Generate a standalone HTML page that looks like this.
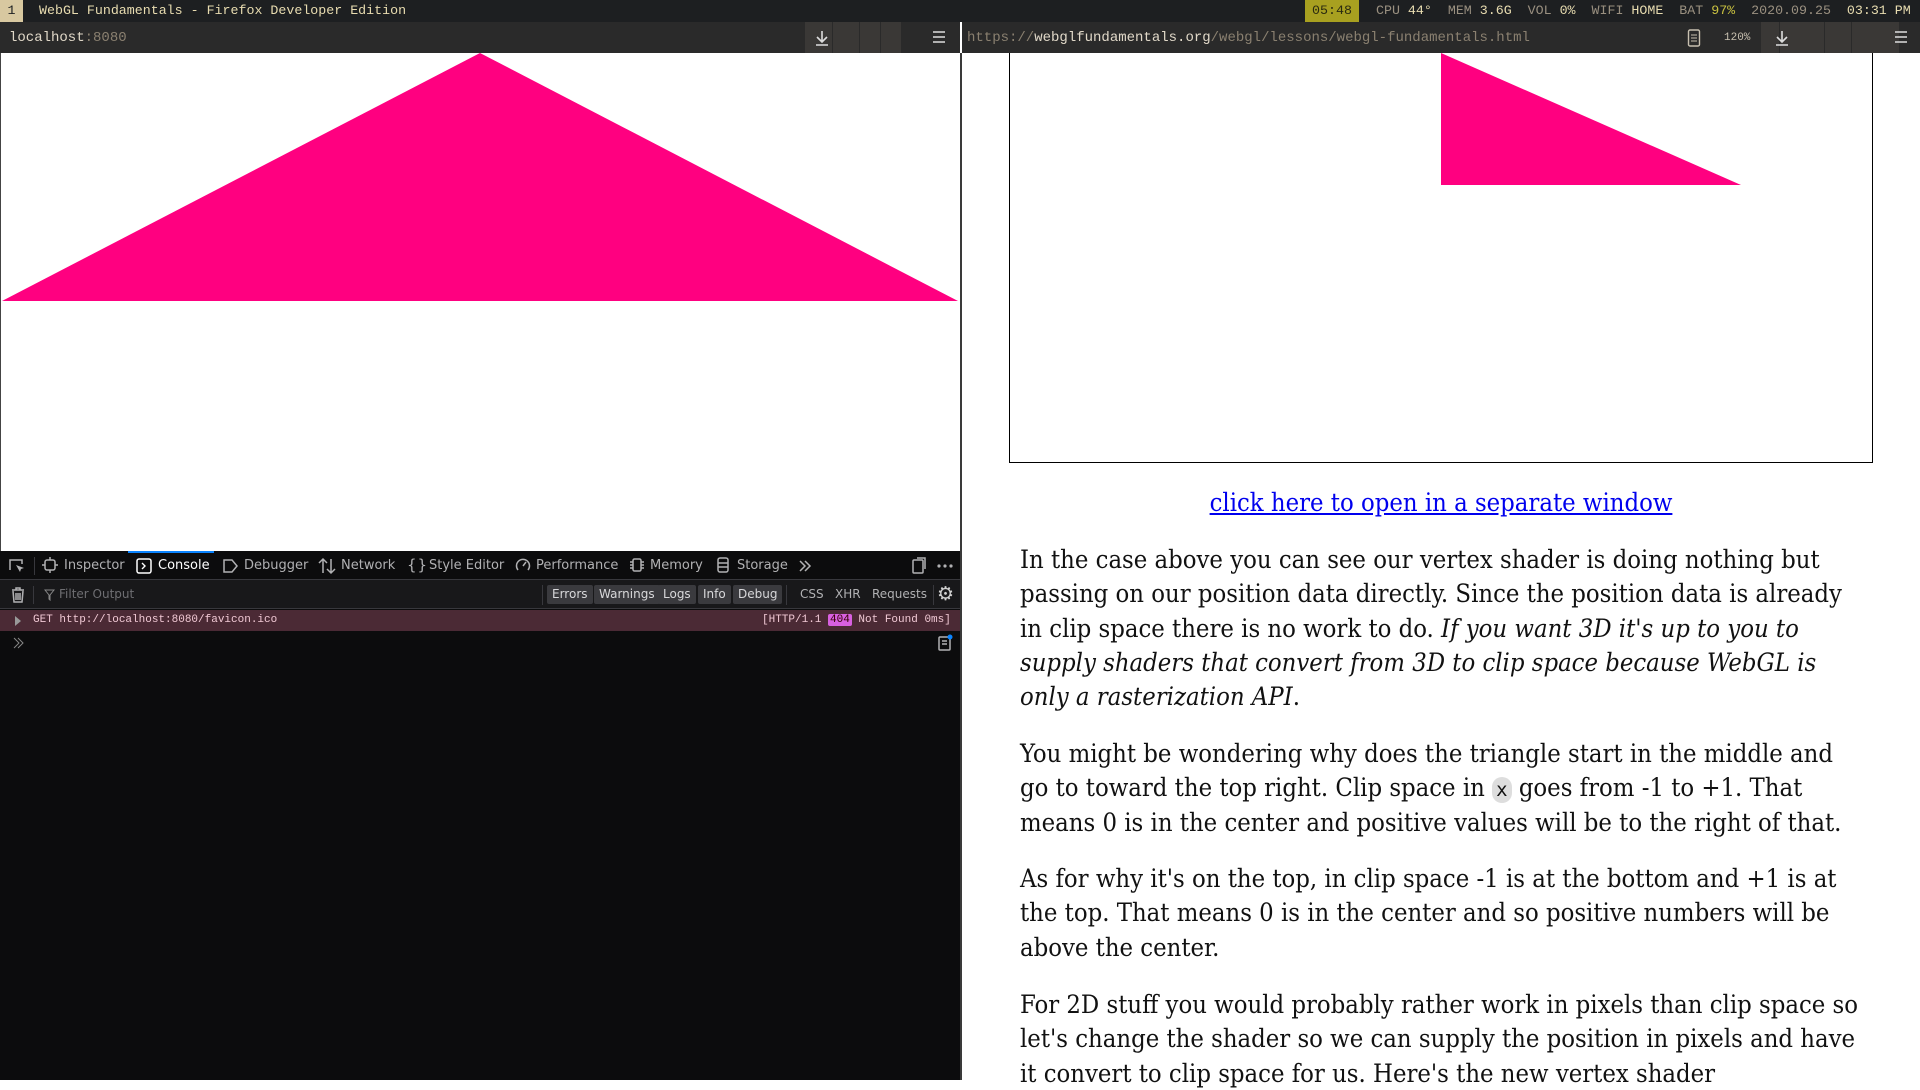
<!DOCTYPE html>
<html><head><meta charset="utf-8">
<style>
*{margin:0;padding:0;box-sizing:border-box}
body{width:1920px;height:1080px;overflow:hidden;background:#fff;position:relative;font-family:"DejaVu Sans","Liberation Sans",sans-serif}
.a{position:absolute;white-space:nowrap}
.mono{font-family:"Liberation Mono","DejaVu Sans Mono",monospace}
#top{left:0;top:0;width:1920px;height:22px;background:#1d1f21;color:#e8dcb0;font-size:13.3px;line-height:22px}
.urlbar{top:22px;height:31px;background:#2a2a2a;font-size:14px;line-height:33px;color:#8a8070}
.btnbg{background:#3a3836;height:31px;top:0}
.tb{color:#b1b1b3;font-size:13px;line-height:28px}
.icn{stroke:#b1b1b3;fill:none;stroke-width:1.5}
.txt{font-family:"DejaVu Serif Condensed","DejaVu Serif","Liberation Serif",serif;font-stretch:condensed;font-size:25.4px;color:#111;left:1020px;line-height:34.3px}
.fb{top:585px;height:19px;background:#3a3a3e;color:#d8d8da;font-size:12px;line-height:19px;padding:0 5px;border-radius:2px}
</style></head><body>

<div class="a mono" id="top">
  <div class="a" style="left:0;top:0;width:23px;height:22px;background:#d8c8a0;color:#1d1f21;text-align:center">1</div>
  <div class="a" style="left:39px;top:0">WebGL Fundamentals - Firefox Developer Edition</div>
  <div class="a" style="left:1305px;top:0;width:54px;height:22px;background:#a8a020;color:#2a2a10;text-align:center">05:48</div>
  <div class="a" style="left:1376px;top:0;color:#9a9080">CPU <span style="color:#e8dcb0">44°</span>&nbsp; MEM <span style="color:#e8dcb0">3.6G</span>&nbsp; VOL <span style="color:#e8dcb0">0%</span>&nbsp; WIFI <span style="color:#e8dcb0">HOME</span>&nbsp; BAT <span style="color:#c8c040">97%</span>&nbsp; 2020.09.25&nbsp; <span style="color:#e8dcb0">03:31 PM</span></div>
</div>

<div class="a urlbar mono" style="left:0;width:960px">
  <span class="a" style="left:9px;top:0"><span style="color:#e0d8c8">localhost</span>:8080</span>
  <div class="a btnbg" style="left:805px;width:96px"></div>
  <div class="a" style="left:832px;top:0;width:1px;height:31px;background:#2a2a2a"></div>
  <div class="a" style="left:859px;top:0;width:1px;height:31px;background:#2a2a2a"></div>
  <div class="a" style="left:880px;top:0;width:1px;height:31px;background:#2a2a2a"></div>
  <svg class="a" style="left:812px;top:6px" width="20" height="20"><path d="M10 3v11M5 9l5 5 5-5M4 17h12" stroke="#ddd" stroke-width="1.6" fill="none"/></svg>
  <svg class="a" style="left:932px;top:8px" width="14" height="14"><path d="M1 2h12M1 7h12M1 12h12" stroke="#ddd" stroke-width="1.6"/></svg>
</div>
<div class="a urlbar mono" style="left:962px;width:958px">
  <span class="a" style="left:5px;top:0">https://<span style="color:#e0d8c8">webglfundamentals.org</span>/webgl/lessons/webgl-fundamentals.html</span>
  <svg class="a" style="left:725px;top:7px" width="14" height="18"><rect x="1.5" y="1" width="11" height="16" rx="1.5" stroke="#c8c0b0" fill="none" stroke-width="1.4"/><path d="M4 6h6M4 9h6M4 12h6" stroke="#c8c0b0"/></svg>
  <span class="a" style="left:762px;top:0;font-size:11px;color:#c8c0b0">120%</span>
  <div class="a btnbg" style="left:799px;width:138px"></div>
  <div class="a" style="left:817px;top:0;width:1px;height:31px;background:#2a2a2a"></div>
  <div class="a" style="left:862px;top:0;width:1px;height:31px;background:#2a2a2a"></div>
  <div class="a" style="left:889px;top:0;width:1px;height:31px;background:#2a2a2a"></div>
  <div class="a" style="left:937px;top:0;width:21px;height:31px;background:#2a2a2a"></div>
  <svg class="a" style="left:810px;top:6px" width="20" height="20"><path d="M10 3v11M5 9l5 5 5-5M4 17h12" stroke="#ddd" stroke-width="1.6" fill="none"/></svg>
  <svg class="a" style="left:932px;top:8px" width="14" height="14"><path d="M1 2h12M1 7h12M1 12h12" stroke="#ddd" stroke-width="1.6"/></svg>
</div>

<svg class="a" style="left:0;top:53px" width="960" height="498"><path d="M480 0L958 248H2Z" fill="#ff0080"/><rect x="0" y="0" width="1" height="498" fill="#444"/></svg>
<div class="a" style="left:960px;top:53px;width:2px;height:1027px;background:#3a3a3a"></div>

<div class="a" style="left:0;top:551px;width:960px;height:529px;background:#0c0c0d"></div>
<div class="a" style="left:0;top:551px;width:960px;height:29px;background:#0c0c0d;border-bottom:1px solid #38383d"></div>
<div class="a" style="left:128px;top:551px;width:86px;height:2px;background:#0a84ff"></div>
<svg class="a" style="left:8px;top:557px" width="18" height="18"><path d="M2 13V3h12v4" class="icn"/><path d="M8 8l8 3-3 1-1 3z" fill="#b1b1b3"/></svg>
<div class="a" style="left:34px;top:557px;width:1px;height:18px;background:#38383d"></div>
<svg class="a" style="left:42px;top:557px" width="16" height="16"><rect x="3" y="3" width="10" height="10" rx="2" class="icn"/><path d="M8 0v3M8 13v3M0 8h3M13 8h3" class="icn"/></svg>
<div class="a tb" style="left:64px;top:552px">Inspector</div>
<svg class="a" style="left:136px;top:558px" width="16" height="16"><rect x="1" y="1" width="14" height="14" rx="2" stroke="#fff" fill="none" stroke-width="1.5"/><path d="M6 5l3 3-3 3" stroke="#fff" fill="none" stroke-width="1.4"/></svg>
<div class="a tb" style="left:158px;top:552px;color:#fff">Console</div>
<svg class="a" style="left:222px;top:558px" width="16" height="16"><path d="M2 2h8l5 6-5 6H2z" class="icn"/></svg>
<div class="a tb" style="left:244px;top:552px">Debugger</div>
<svg class="a" style="left:318px;top:557px" width="18" height="18"><path d="M5 16V2M1 6l4-4 4 4M13 2v14M9 12l4 4 4-4" class="icn"/></svg>
<div class="a tb" style="left:341px;top:552px">Network</div>
<div class="a tb" style="left:407px;top:551px;font-size:15px;letter-spacing:1px">{}</div>
<div class="a tb" style="left:429px;top:552px">Style Editor</div>
<svg class="a" style="left:515px;top:557px" width="16" height="16"><path d="M3 13A6.5 6.5 0 1 1 13 13" class="icn"/><path d="M8 9l3-4" class="icn"/></svg>
<div class="a tb" style="left:536px;top:552px">Performance</div>
<svg class="a" style="left:629px;top:557px" width="16" height="16"><rect x="4" y="2" width="8" height="12" rx="1.5" class="icn"/><path d="M1 5h3M1 8h3M1 11h3M12 5h3M12 8h3M12 11h3" class="icn"/></svg>
<div class="a tb" style="left:650px;top:552px">Memory</div>
<svg class="a" style="left:715px;top:557px" width="16" height="16"><rect x="3" y="1" width="10" height="14" rx="2" class="icn"/><path d="M3 6h10M3 10h10" class="icn"/></svg>
<div class="a tb" style="left:737px;top:552px">Storage</div>
<svg class="a" style="left:798px;top:559px" width="14" height="14"><path d="M2 2l5 5-5 5M7 2l5 5-5 5" class="icn"/></svg>
<svg class="a" style="left:911px;top:557px" width="16" height="18"><rect x="2" y="3" width="10" height="13" rx="1" class="icn"/><path d="M6 1h8v11" class="icn"/></svg>
<svg class="a" style="left:937px;top:563px" width="16" height="6"><circle cx="2" cy="3" r="1.6" fill="#b1b1b3"/><circle cx="8" cy="3" r="1.6" fill="#b1b1b3"/><circle cx="14" cy="3" r="1.6" fill="#b1b1b3"/></svg>

<div class="a" style="left:0;top:580px;width:960px;height:29px;background:#18181a;border-bottom:1px solid #38383d"></div>
<svg class="a" style="left:10px;top:586px" width="16" height="18"><path d="M2 4h12M6 4V2h4v2M3 5l1 11h8l1-11M6 7v7M8 7v7M10 7v7" class="icn"/></svg>
<div class="a" style="left:33px;top:586px;width:1px;height:18px;background:#38383d"></div>
<svg class="a" style="left:44px;top:589px" width="11" height="12"><path d="M1 1h9L6 6v5L5 10V6z" stroke="#888" fill="none"/></svg>
<div class="a" style="left:59px;top:587px;font-size:12px;color:#6e6e72">Filter Output</div>
<div class="a" style="left:542px;top:585px;width:1px;height:20px;background:#38383d"></div>
<div class="a fb" style="left:547px">Errors</div>
<div class="a fb" style="left:594px">Warnings</div>
<div class="a fb" style="left:658px">Logs</div>
<div class="a fb" style="left:698px">Info</div>
<div class="a fb" style="left:733px">Debug</div>
<div class="a" style="left:786px;top:585px;width:1px;height:20px;background:#38383d"></div>
<div class="a" style="left:800px;top:587px;font-size:12px;color:#b1b1b3">CSS</div>
<div class="a" style="left:835px;top:587px;font-size:12px;color:#b1b1b3">XHR</div>
<div class="a" style="left:872px;top:587px;font-size:12px;color:#b1b1b3">Requests</div>
<div class="a" style="left:933px;top:585px;width:1px;height:20px;background:#38383d"></div>
<div class="a" style="left:937px;top:583px;font-size:19px;color:#d0d0d0">⚙</div>

<div class="a mono" style="left:0;top:610px;width:960px;height:21px;background:#4b2a35;color:#f0c8d4;font-size:11px;line-height:21px">
  <svg class="a" style="left:14px;top:6px" width="8" height="10"><path d="M1 0l6 5-6 5z" fill="#999"/></svg>
  <span class="a" style="left:33px">GET http://localhost:8080/favicon.ico</span>
  <span class="a" style="left:762px">[HTTP/1.1 <span style="background:#d860e0;color:#300;padding:0 2px;border-radius:2px">404</span> Not Found 0ms]</span>
</div>
<svg class="a" style="left:11px;top:636px" width="14" height="14"><path d="M3 2l5 5-5 5M7 2l5 5-5 5" stroke="#888" fill="none"/></svg>
<svg class="a" style="left:937px;top:634px" width="16" height="18"><rect x="2" y="3" width="11" height="13" rx="1" class="icn"/><path d="M5 7h5M5 10h5" class="icn"/><circle cx="13" cy="3" r="2.5" fill="#0a84ff"/></svg>

<div class="a" style="left:1009px;top:53px;width:864px;height:410px;border:1px solid #000;border-top:none"></div>
<svg class="a" style="left:1441px;top:53px" width="302" height="134"><path d="M0 0L300 132H0Z" fill="#ff0080"/></svg>
<div class="a" style="left:1010px;width:862px;top:485px;text-align:center;font-family:'DejaVu Serif Condensed','DejaVu Serif',serif;font-stretch:condensed;font-size:25.4px;line-height:34px"><span style="color:#0000ee;text-decoration:underline">click here to open in a separate window</span></div>

<div class="a txt" style="top:542px">In the case above you can see our vertex shader is doing nothing but<br>passing on our position data directly. Since the position data is already<br>in clip space there is no work to do. <i>If you want 3D it's up to you to<br>supply shaders that convert from 3D to clip space because WebGL is<br>only a rasterization API</i>.</div>
<div class="a txt" style="top:736px">You might be wondering why does the triangle start in the middle and<br>go to toward the top right. Clip space in <span style="background:#ddd;border-radius:12px;padding:2px 4px;font-family:'DejaVu Sans Mono',monospace;font-size:19px;line-height:1">x</span> goes from -1 to +1. That<br>means 0 is in the center and positive values will be to the right of that.</div>
<div class="a txt" style="top:861px">As for why it's on the top, in clip space -1 is at the bottom and +1 is at<br>the top. That means 0 is in the center and so positive numbers will be<br>above the center.</div>
<div class="a txt" style="top:987px">For 2D stuff you would probably rather work in pixels than clip space so<br>let's change the shader so we can supply the position in pixels and have<br>it convert to clip space for us. Here's the new vertex shader</div>
</body></html>
